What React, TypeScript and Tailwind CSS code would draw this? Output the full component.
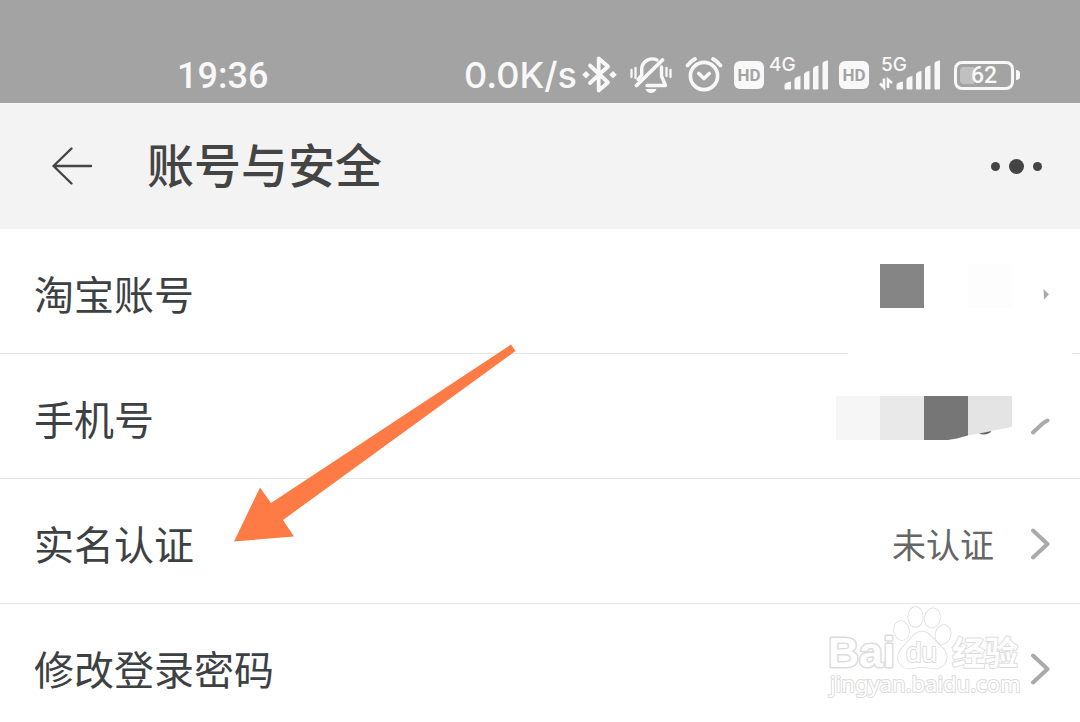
import type { ReactNode } from "react";

function BluetoothIcon() {
  return (
    <svg className="h-10 w-[38px]" viewBox="580 55 38 40" fill="none" stroke="#f8f8f8" strokeWidth="3.8" strokeLinejoin="round" strokeLinecap="round" aria-hidden="true">
      <path d="M589 65.500L607 82.500L597.700 90.500V58.500L607 66.500L589 83" />
      <g fill="#f8f8f8" stroke="none">
        <path d="M585 71l3.800 3.800-3.800 3.800-3.800-3.800zM612 71l3.800 3.800-3.800 3.800-3.800-3.800z" />
      </g>
    </svg>
  );
}

function BellOffIcon() {
  return (
    <svg className="h-10 w-[44px]" viewBox="628 55 44 40" fill="none" stroke="#f8f8f8" strokeWidth="3.400" strokeLinecap="round" strokeLinejoin="round" aria-hidden="true">
      <path d="M635.500 85.500L661.500 60" strokeWidth="3.800" />
      <path d="M656 60C650 57 641.500 60.500 640.700 68.500V75L637 79.500" />
      <path d="M660.500 67V76L664.500 85.500H646" />
      <path d="M630.500 70v7M634.500 68v10M665.500 68v8M669.500 70v7" strokeWidth="2.300" />
      <path d="M644.500 89h11c-1.500 5.300-9.500 5.300-11 0z" fill="#f8f8f8" stroke="none" />
    </svg>
  );
}

function AlarmIcon() {
  return (
    <svg className="h-10 w-[41px]" viewBox="682 55 41 40" fill="none" stroke="#f8f8f8" strokeWidth="3.600" strokeLinecap="round" strokeLinejoin="round" aria-hidden="true">
      <circle cx="703" cy="76" r="13.600" />
      <path d="M697.800 73.500L703 78.500L708.200 73.500" />
      <path d="M686.500 65.500C688.500 62.500 691 60.500 694 59M712 59C715 60.500 717.500 62.500 719.500 65.500" strokeWidth="3.800" />
    </svg>
  );
}

function HdBadge() {
  return (
    <span className="flex h-7 w-[30px] items-center justify-center rounded-md bg-[#f8f8f8] font-['Roboto',sans-serif] text-[17px] font-bold leading-none text-[#a3a3a3]">
      HD
    </span>
  );
}

function Signal({ label, active = false }: { label: string; active?: boolean }) {
  return (
    <svg className={active ? "h-10 w-[67px] overflow-visible" : "h-10 w-[60px] overflow-visible"} viewBox={active ? "-7 1 67 40" : "0 1 60 40"} fill="#f8f8f8" role="img" aria-label={label}>
      <text x="0" y="17" fontSize="19" fontFamily="Inter, sans-serif" fontWeight="500">{label}</text>
      <path d="M15.500 31Q16 28.500 22 27.500V34.500Q22 35.500 21 35.500H16.500Q15.500 35.500 15.500 34.500zM25.500 25Q27 22.500 31.500 22V34.500Q31.500 35.500 30.500 35.500H26.500Q25.500 35.500 25.500 34.500zM35 20Q36 17.500 40.500 17V34.500Q40.500 35.500 39.500 35.500H36Q35 35.500 35 34.500zM44 14.500Q45 12 49.500 11.500V34.500Q49.500 35.500 48.500 35.500H45Q44 35.500 44 34.500zM53.500 9Q54.500 7 59 6.500V34.500Q59 35.500 58 35.500H54.500Q53.500 35.500 53.500 34.500z" />
      {active && (
        <path d="M4 25.500V34.500L0 30.500M8 35V26.500L12 30" transform="translate(-1 -1)" fill="none" stroke="#f8f8f8" strokeWidth="2.600" />
      )}
    </svg>
  );
}

function Battery() {
  return (
    <span className="ml-[3px] flex items-center gap-[2px]">
      <span className="flex h-[29px] w-[60px] items-center rounded-lg border-3 border-[#f8f8f8] p-[3px]">
        <span className="flex h-full w-full items-center justify-center rounded-sm bg-linear-to-r from-[#c0c0c0] from-30% to-transparent to-30% font-['Roboto',sans-serif] text-[23px] font-medium leading-none">
          62
        </span>
      </span>
      <span className="h-[10px] w-1 rounded-r-sm bg-[#f8f8f8]" />
    </span>
  );
}

function StatusBar() {
  return (
    <div className="flex h-[103px] shrink-0 items-end justify-between bg-[#a3a3a3] pb-2 pl-[177px] pr-[60px] font-['Inter',sans-serif] text-[#f8f8f8]">
      <span className="font-['Roboto',sans-serif] text-[36px] font-medium leading-[38px]">19:36</span>
      <div className="flex items-center gap-[10px]">
        <div className="flex items-center gap-1">
          <span className="text-[36px] font-medium leading-10">0.0K/s</span>
          <BluetoothIcon />
        </div>
        <BellOffIcon />
        <AlarmIcon />
        <div className="flex items-center gap-[5px]">
          <HdBadge />
          <Signal label="4G" />
        </div>
        <div className="flex items-center gap-[5px]">
          <HdBadge />
          <Signal label="5G" active />
        </div>
        <Battery />
      </div>
    </div>
  );
}

function Header() {
  return (
    <header className="flex h-[126px] shrink-0 items-center bg-[#f3f3f3] pl-[51px] pr-[38px]">
      <button type="button" aria-label="返回" className="flex h-12 items-center">
        <svg className="h-10 w-[42px]" viewBox="0 0 42 40" fill="none" stroke="#444" strokeWidth="2.400" strokeLinecap="round" strokeLinejoin="round">
          <path d="M20.500 2.500L2.500 20L20.500 37.500M2.500 20H40" />
        </svg>
      </button>
      <h1 className="ml-[54px] pb-[6px] text-[47px] font-medium leading-[56px] text-[#444]">账号与安全</h1>
      <button type="button" aria-label="更多" className="ml-auto flex h-12 items-center gap-[9px]">
        <span className="size-[9px] rounded-full bg-[#444]" />
        <span className="size-[15px] rounded-full bg-[#444]" />
        <span className="size-[9px] rounded-full bg-[#444]" />
      </button>
    </header>
  );
}

function Chevron({ d = "M3 2.500L17.500 16L3 29.500" }: { d?: string }) {
  return (
    <svg className="h-8 w-5" viewBox="0 0 20 32" fill="none" stroke="#aaa" strokeWidth="4" strokeLinecap="round" strokeLinejoin="round" aria-hidden="true">
      <path d={d} />
    </svg>
  );
}

function Row({ label, value, chevron, divider }: { label: string; value?: ReactNode; chevron?: ReactNode; divider?: ReactNode }) {
  return (
    <li className="shrink-0">
      <a href="#" className="flex h-[124px] items-center pl-[34px] pr-[30px] pt-[6px]">
        <span className="pb-[2px] text-[40px] leading-[48px] text-[#3d4143]">{label}</span>
        <span className="ml-auto flex items-center gap-[18px]">
          {value}
          {chevron ?? <Chevron />}
        </span>
      </a>
      {divider ?? <div className="h-px bg-[#e5e5e5]" />}
    </li>
  );
}

function AccountMask() {
  return (
    <svg className="h-[60px] w-[176px]" viewBox="0 0 176 60" aria-hidden="true">
      <rect x="44" width="44" height="44" fill="#858585" />
      <rect x="132" width="44" height="44" fill="#fdfdfd" />
    </svg>
  );
}

function PhoneMask() {
  return (
    <svg className="h-[46px] w-[176px]" viewBox="0 0 176 46" aria-hidden="true">
      <path d="M0 0h44v44H0z" fill="#f6f6f6" />
      <path d="M44 0h44v44H44z" fill="#e9e9e9" />
      <path d="M88 0h44v39.500Q120 43 112 44H88z" fill="#767676" />
      <path d="M132 0h44v31L132 39.500z" fill="#e4e4e4" />
      <path d="M143 37.500L155.500 35C154 38.500 147 39.500 143 37.500z" fill="#666" />
    </svg>
  );
}

function Watermark() {
  return (
    <svg
      className="pointer-events-none absolute right-[54px] top-[374px] h-[100px] w-[204px]"
      viewBox="822 603 204 100"
      fill="#fff"
      stroke="#dcdcdc"
      strokeWidth="2"
      strokeLinejoin="round"
      paintOrder="stroke"
      fontFamily="'Liberation Sans', 'Noto Sans CJK SC', sans-serif"
      aria-hidden="true"
    >
      <text x="828" y="667" fontSize="43" fontWeight="700" strokeWidth="3">Bai</text>
      <g strokeWidth="1.500">
        <ellipse cx="901.500" cy="630.500" rx="7.500" ry="9.500" transform="rotate(-12 901.500 630.500)" />
        <ellipse cx="915.500" cy="617" rx="7.300" ry="10" />
        <ellipse cx="932.500" cy="618" rx="7.500" ry="9.700" transform="rotate(10 932.500 618)" />
        <ellipse cx="943" cy="634.500" rx="7.500" ry="9.500" transform="rotate(15 943 634.500)" />
        <path d="M922 631.500C913 632 911 640 904 646C897 652 896 661 902 666C909 671 915 667 922 667S936 671 942 666C949 661 948 652 940 645.500C933 640 931 632 922 631.500z" />
      </g>
      <text x="906" y="662" fontSize="28" strokeWidth="2">du</text>
      <text x="952" y="665" fontSize="33" fontWeight="700">经验</text>
      <text x="830" y="692" fontSize="22" fontFamily="'Noto Sans', sans-serif">jingyan.baidu.com</text>
    </svg>
  );
}

function PointerArrow() {
  return (
    <svg className="pointer-events-none absolute left-[230px] top-[111px] h-[210px] w-[290px]" viewBox="230 340 290 210" fill="#ff7b45" aria-hidden="true">
      <path d="M234 541.500L260 487.500L271 503L511 344.500L515.500 351L283 520L294 536.500z" />
    </svg>
  );
}

export default function App() {
  return (
    <div className="flex h-screen flex-col overflow-hidden bg-white font-['Noto_Sans_CJK_SC',sans-serif]">
      <StatusBar />
      <Header />
      <main className="relative min-h-0 flex-1 overflow-hidden">
        <ul className="flex flex-col">
          <Row
            label="淘宝账号"
            value={<AccountMask />}
            chevron={
              <svg className="h-8 w-5" viewBox="0 0 20 32" fill="#aaa" aria-hidden="true">
                <path d="M13.500 11L19 16.500L14 21.500z" />
              </svg>
            }
            divider={
              <div className="flex h-px">
                <div className="flex-1 bg-[#e5e5e5]" />
                <div className="w-[224px]" />
                <div className="w-2 bg-[#e5e5e5]" />
              </div>
            }
          />
          <Row label="手机号" value={<PhoneMask />} chevron={<Chevron d="M3 29.500L11 22Q14 19 17.500 17.500" />} />
          <Row label="实名认证" value={<span className="mr-[18px] text-[34px] leading-[48px] text-[#666]">未认证</span>} />
          <Row label="修改登录密码" />
        </ul>
        <PointerArrow />
        <Watermark />
      </main>
    </div>
  );
}
